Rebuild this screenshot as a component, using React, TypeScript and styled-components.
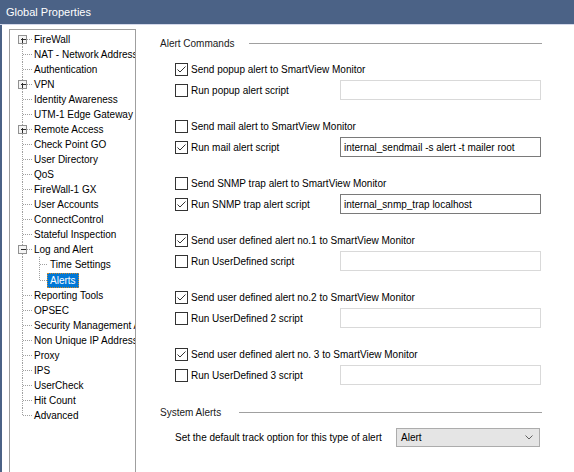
import React from 'react';
import styled, { createGlobalStyle } from 'styled-components';

const GlobalStyle = createGlobalStyle`
  html, body {
    margin: 0;
    padding: 0;
    background: #ffffff;
  }
  body {
    font-family: "Liberation Sans", Arial, sans-serif;
    font-size: 10px;
    color: #000;
  }
`;

type TreeNode = {
  label: string;
  expander?: '+' | '-';
  children?: { label: string; selected?: boolean }[];
};

const treeNodes: TreeNode[] = [
  { label: 'FireWall', expander: '+' },
  { label: 'NAT - Network Address Translation' },
  { label: 'Authentication' },
  { label: 'VPN', expander: '+' },
  { label: 'Identity Awareness' },
  { label: 'UTM-1 Edge Gateway' },
  { label: 'Remote Access', expander: '+' },
  { label: 'Check Point GO' },
  { label: 'User Directory' },
  { label: 'QoS' },
  { label: 'FireWall-1 GX' },
  { label: 'User Accounts' },
  { label: 'ConnectControl' },
  { label: 'Stateful Inspection' },
  {
    label: 'Log and Alert',
    expander: '-',
    children: [{ label: 'Time Settings' }, { label: 'Alerts', selected: true }],
  },
  { label: 'Reporting Tools' },
  { label: 'OPSEC' },
  { label: 'Security Management Access' },
  { label: 'Non Unique IP Address Ranges' },
  { label: 'Proxy' },
  { label: 'IPS' },
  { label: 'UserCheck' },
  { label: 'Hit Count' },
  { label: 'Advanced' },
];

type AlertGroup = {
  send: string;
  sendChecked: boolean;
  run: string;
  runChecked: boolean;
  script: string;
};

const alertGroups: AlertGroup[] = [
  { send: 'Send popup alert to SmartView Monitor', sendChecked: true, run: 'Run popup alert script', runChecked: false, script: '' },
  { send: 'Send mail alert to SmartView Monitor', sendChecked: false, run: 'Run mail alert script', runChecked: true, script: 'internal_sendmail -s alert -t mailer root' },
  { send: 'Send SNMP trap alert to SmartView Monitor', sendChecked: false, run: 'Run SNMP trap alert script', runChecked: true, script: 'internal_snmp_trap localhost' },
  { send: 'Send user defined alert no.1 to SmartView Monitor', sendChecked: true, run: 'Run UserDefined script', runChecked: false, script: '' },
  { send: 'Send user defined alert no.2 to SmartView Monitor', sendChecked: true, run: 'Run UserDefined 2 script', runChecked: false, script: '' },
  { send: 'Send user defined alert no. 3 to SmartView Monitor', sendChecked: true, run: 'Run UserDefined 3 script', runChecked: false, script: '' },
];

// tree connector drawing: vertical dotted line (upper / lower half) + horizontal stub
function Connector({
  width,
  lineX,
  top,
  bottom,
  stub = true,
  expander,
}: {
  width: number;
  lineX: number;
  top: boolean;
  bottom: boolean;
  stub?: boolean;
  expander?: '+' | '-';
}) {
  const x = lineX + 0.5;
  return (
    <svg width={width} height={15} shapeRendering="crispEdges" style={{ flex: 'none', display: 'block' }}>
      <g stroke="#a0a0a0" strokeWidth={1} strokeDasharray="1 1">
        {top && <line x1={x} y1={0} x2={x} y2={7.5} />}
        {bottom && <line x1={x} y1={8} x2={x} y2={15} />}
        {stub && <line x1={x} y1={7.5} x2={width} y2={7.5} />}
      </g>
      {expander && (
        <g>
          <rect x={x - 4} y={3.5} width={8} height={8} fill="#f4f4f4" stroke="#919191" />
          <line x1={x - 2} y1={7.5} x2={x + 3} y2={7.5} stroke="#2b2b2b" />
          {expander === '+' && <line x1={x} y1={5.5} x2={x} y2={10.5} stroke="#2b2b2b" />}
        </g>
      )}
    </svg>
  );
}

function CheckBox({ checked }: { checked: boolean }) {
  return (
    <svg width={13} height={13} shapeRendering="crispEdges" style={{ flex: 'none', display: 'block' }}>
      <rect x={0.5} y={0.5} width={12} height={12} fill="#fff" stroke="#333" />
      {checked && (
        <polyline
          points="2.5,6.5 5,9 10.5,3.5"
          fill="none"
          stroke="#333"
          strokeWidth={1}
          shapeRendering="geometricPrecision"
        />
      )}
    </svg>
  );
}

export default function App() {
  return (
    <>
      <GlobalStyle />
      <Window>
        <TitleBar>Global Properties</TitleBar>
        <Body>
          <TreeBox>
            {treeNodes.map((node, i) => {
              const first = i === 0;
              const last = i === treeNodes.length - 1;
              return (
                <React.Fragment key={node.label}>
                  <TreeRow>
                    <Connector width={22} lineX={12} top={!first} bottom={!last} expander={node.expander} />
                    <NodeLabel>{node.label}</NodeLabel>
                  </TreeRow>
                  {node.children?.map((child, j) => (
                    <TreeRow key={child.label}>
                      <Connector width={22} lineX={12} top bottom={!last} stub={false} />
                      <Connector width={16} lineX={7} top bottom={j < node.children!.length - 1} />
                      <NodeLabel $selected={child.selected}>{child.label}</NodeLabel>
                    </TreeRow>
                  ))}
                </React.Fragment>
              );
            })}
          </TreeBox>

          <Panel>
            <SectionHeader>
              <span>Alert Commands</span>
              <Rule />
            </SectionHeader>

            <Groups>
              {alertGroups.map((g) => (
                <Group key={g.send}>
                  <CheckRow>
                    <CheckBox checked={g.sendChecked} />
                    <CheckText>{g.send}</CheckText>
                  </CheckRow>
                  <ScriptRow>
                    <CheckRow>
                      <CheckBox checked={g.runChecked} />
                      <CheckText>{g.run}</CheckText>
                    </CheckRow>
                    <ScriptInput $enabled={g.runChecked}>{g.script}</ScriptInput>
                  </ScriptRow>
                </Group>
              ))}
            </Groups>

            <SectionHeader $system>
              <span>System Alerts</span>
              <Rule />
            </SectionHeader>

            <TrackRow>
              <span>Set the default track option for this type of alert</span>
              <Select>
                <span>Alert</span>
                <svg width={8} height={5} viewBox="0 0 8 5">
                  <polyline points="0.5,0.5 4,4 7.5,0.5" fill="none" stroke="#606060" strokeWidth={1} />
                </svg>
              </Select>
            </TrackRow>
          </Panel>
        </Body>
      </Window>
    </>
  );
}

const Window = styled.div`
  width: 574px;
  height: 472px;
  display: flex;
  flex-direction: column;
  overflow: hidden;
  background: #fff;
`;

const TitleBar = styled.div`
  flex: none;
  height: 24px;
  padding-left: 6px;
  display: flex;
  align-items: center;
  background: #4b6286;
  color: #fff;
  font-size: 11px;
  border-bottom: 1px solid #d3d8ea;
`;

const Body = styled.div`
  flex: 1;
  min-height: 0;
  display: flex;
  align-items: flex-start;
  border-left: 2px solid #4b6286;
`;

const TreeBox = styled.div`
  flex: none;
  width: 125px;
  height: 460px;
  margin: 4px 0 0 7px;
  padding-top: 2px;
  border: 1px solid #9f9f9f;
  box-sizing: content-box;
  overflow: hidden;
  background: #fff;
`;

const TreeRow = styled.div`
  display: flex;
  align-items: center;
  height: 15.04px;
  white-space: nowrap;
`;

const NodeLabel = styled.span<{ $selected?: boolean }>`
  display: inline-block;
  height: 13px;
  line-height: 13px;
  padding: 0 2px;
  border: 1px solid transparent;
  margin-left: -1px;
  background: ${(p) => (p.$selected ? '#0078d7' : 'transparent')};
  color: ${(p) => (p.$selected ? '#fff' : '#000')};
  outline: ${(p) => (p.$selected ? '1px dotted #d08a2a' : 'none')};
  outline-offset: -1px;
`;

const Panel = styled.div`
  flex: none;
  width: 382px;
  margin-left: 24px;
  padding-top: 11px;
  display: flex;
  flex-direction: column;
`;

const SectionHeader = styled.div<{ $system?: boolean }>`
  display: flex;
  align-items: center;
  gap: ${(p) => (p.$system ? '18px' : '15px')};
  height: 14px;
  margin-top: ${(p) => (p.$system ? '19px' : '0')};
  color: #1a1a1a;
`;

const Rule = styled.div`
  flex: 1;
  height: 1px;
  background: #a0a0a0;
`;

const Groups = styled.div`
  display: flex;
  flex-direction: column;
  gap: 15px;
  margin-top: 9px;
  padding-left: 15px;
`;

const Group = styled.div`
  display: flex;
  flex-direction: column;
`;

const CheckRow = styled.div`
  display: flex;
  align-items: center;
  height: 20px;
  gap: 3px;
  white-space: nowrap;
`;

const CheckText = styled.span`
  line-height: 13px;
`;

const ScriptRow = styled.div`
  display: grid;
  grid-template-columns: 165px 201px;
  align-items: center;
  height: 22px;
`;

const ScriptInput = styled.div<{ $enabled: boolean }>`
  box-sizing: border-box;
  height: 20px;
  padding: 0 3px;
  display: flex;
  align-items: center;
  border: 1px solid ${(p) => (p.$enabled ? '#7a7a7a' : '#d9d9d9')};
  background: #fff;
  white-space: nowrap;
  overflow: hidden;
`;

const TrackRow = styled.div`
  display: flex;
  align-items: center;
  justify-content: space-between;
  width: 365px;
  height: 19px;
  margin-top: 9px;
  padding-left: 15px;
`;

const Select = styled.div`
  box-sizing: border-box;
  width: 144px;
  height: 19px;
  padding: 0 6px 0 4px;
  display: flex;
  align-items: center;
  justify-content: space-between;
  background: #e5e5e5;
  border: 1px solid #acacac;
`;
